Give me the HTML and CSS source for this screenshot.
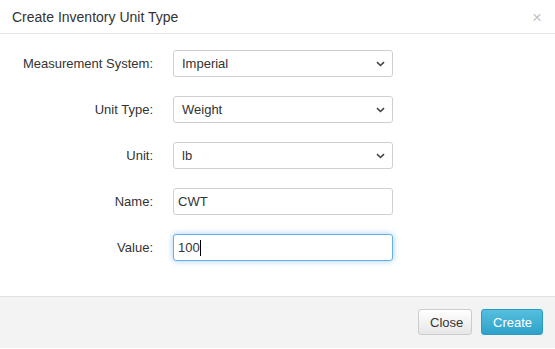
FILE: index.html
```html
<!DOCTYPE html>
<html>
<head>
<meta charset="utf-8">
<link rel="stylesheet" href="styles.css">
</head>
<body>
<div class="modal">
  <div class="modal-header">
    <h4 class="modal-title">Create Inventory Unit Type</h4>
    <span class="close">×</span>
  </div>
  <div class="modal-body">
    <div class="row">
      <label class="lbl">Measurement System:</label>
      <div class="select"><span>Imperial</span><svg class="chev" width="9" height="6" viewBox="0 0 9 6"><path d="M1 1.2 L4.5 4.5 L8 1.2" fill="none" stroke="#444" stroke-width="1.6"/></svg></div>
    </div>
    <div class="row">
      <label class="lbl">Unit Type:</label>
      <div class="select"><span>Weight</span><svg class="chev" width="9" height="6" viewBox="0 0 9 6"><path d="M1 1.2 L4.5 4.5 L8 1.2" fill="none" stroke="#444" stroke-width="1.6"/></svg></div>
    </div>
    <div class="row">
      <label class="lbl">Unit:</label>
      <div class="select"><span>lb</span><svg class="chev" width="9" height="6" viewBox="0 0 9 6"><path d="M1 1.2 L4.5 4.5 L8 1.2" fill="none" stroke="#444" stroke-width="1.6"/></svg></div>
    </div>
    <div class="row">
      <label class="lbl">Name:</label>
      <div class="input">CWT</div>
    </div>
    <div class="row">
      <label class="lbl">Value:</label>
      <div class="input focus">100<span class="caret"></span></div>
    </div>
  </div>
  <div class="modal-footer">
    <button class="btn btn-default">Close</button>
    <button class="btn btn-info">Create</button>
  </div>
</div>
</body>
</html>
```
FILE: styles.css
```css
html, body {
  margin: 0;
  padding: 0;
  background: #fff;
}
body {
  font-family: "Liberation Sans", Arial, sans-serif;
  font-size: 13px;
  color: #333;
}
.modal {
  width: 555px;
  height: 349px;
  display: flex;
  flex-direction: column;
}
.modal-header {
  height: 34px;
  box-sizing: border-box;
  border-bottom: 1px solid #e5e5e5;
  display: flex;
  align-items: center;
  justify-content: space-between;
  padding: 0 13px 0 12px;
}
.modal-title {
  margin: 0;
  font-size: 14px;
  font-weight: normal;
  color: #333;
}
.close {
  font-size: 17px;
  color: #c4c4c4;
  line-height: 1;
  margin-top: 2px;
}
.modal-body {
  flex: 1;
  padding-top: 16px;
  display: flex;
  flex-direction: column;
  gap: 19px;
}
.row {
  display: flex;
  align-items: center;
  gap: 20px;
}
.lbl {
  width: 153px;
  text-align: right;
}
.select, .input {
  width: 220px;
  height: 27px;
  box-sizing: border-box;
  border: 1px solid #cfcfcf;
  border-radius: 3px;
  display: flex;
  align-items: center;
  background: #fff;
  color: #333;
}
.select {
  padding: 0 8px;
  justify-content: space-between;
  font-size: 13px;
}
.chev {
  margin-right: -1px;
  margin-top: 1px;
}
.input {
  padding: 0 4px;
}
.input.focus {
  border-color: #66afe9;
  box-shadow: 0 0 6px rgba(102, 175, 233, 0.6);
}
.caret {
  display: inline-block;
  width: 1px;
  height: 16px;
  background: #000;
  margin-left: 0;
}
.modal-footer {
  height: 53px;
  box-sizing: border-box;
  border-top: 1px solid #e0e0e0;
  border-bottom: 1px solid #fff;
  background: #f3f3f3;
  display: flex;
  align-items: center;
  justify-content: flex-end;
  gap: 9px;
  padding: 0 12px 1px 0;
}
.btn {
  height: 26px;
  box-sizing: border-box;
  border-radius: 3px;
  font-family: "Liberation Sans", Arial, sans-serif;
  font-size: 13px;
  padding: 0 11px;
  margin: 0;
}
.btn-default {
  width: 54px;
  color: #333;
  border: 1px solid #ccc;
  background: linear-gradient(#fff, #e6e6e6);
}
.btn-info {
  width: 62px;
  color: #fff;
  border: 1px solid #2a9cc4;
  background: linear-gradient(#55bfde, #2fa2c9);
}
```
